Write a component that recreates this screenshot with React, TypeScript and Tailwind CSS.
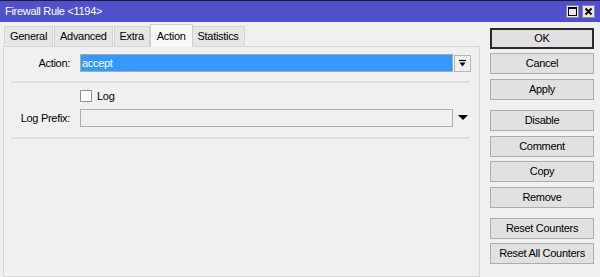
const tabs = ["General", "Advanced", "Extra", "Action", "Statistics"];

type Btn = { label: string; mt: string; primary?: boolean };

const buttons: Btn[] = [
  { label: "OK", mt: "mt-0", primary: true },
  { label: "Cancel", mt: "mt-[4px]" },
  { label: "Apply", mt: "mt-[5px]" },
  { label: "Disable", mt: "mt-[10px]" },
  { label: "Comment", mt: "mt-[5px]" },
  { label: "Copy", mt: "mt-[4px]" },
  { label: "Remove", mt: "mt-[5px]" },
  { label: "Reset Counters", mt: "mt-[10px]" },
  { label: "Reset All Counters", mt: "mt-[4px]" },
];

function TitleButtons() {
  return (
    <div className="ml-auto flex gap-[3px]">
      <div className="w-[13px] h-[13px] bg-[#e8e8e8] border border-[#8a8a8a] flex items-center justify-center">
        <div className="w-[9px] h-[9px] border border-black border-t-2" />
      </div>
      <div className="w-[13px] h-[13px] bg-[#e8e8e8] border border-[#8a8a8a] flex items-center justify-center">
        <svg width="9" height="9" viewBox="0 0 9 9">
          <path d="M1.5 1.5 L7.5 7.5 M7.5 1.5 L1.5 7.5" stroke="#000" strokeWidth="1.8" />
        </svg>
      </div>
    </div>
  );
}

export default function App() {
  return (
    <div className="w-[600px] h-[277px] overflow-hidden bg-[#f0f0f0] font-['Liberation_Sans',Arial,sans-serif] text-[11px] tracking-[-0.3px] text-black">
      <div className="h-[22px] border-t border-[#1e1e2e] bg-[#5050cc] flex items-center pl-[5px] pr-[5px]">
        <span className="text-white text-[11px] leading-none">Firewall Rule &lt;1194&gt;</span>
        <TitleButtons />
      </div>

      <div className="flex">
        <div className="pl-[3px] w-[480px] flex flex-col">
          <div className="h-[24px] flex items-end pl-[1px]">
            {tabs.map((t) => {
              const active = t === "Action";
              return (
                <div
                  key={t}
                  className={`flex items-center px-[5px] border border-b-0 ${
                    active
                      ? "h-[23px] bg-[#f7f7f7] border-[#d0d0d0] -mb-px relative z-10 mx-[-1px] px-[6px]"
                      : "h-[20px] bg-[#e6e6e6] border-[#d4d4d4] mr-[1px]"
                  }`}
                >
                  {t}
                </div>
              );
            })}
          </div>

          <div className="w-[477px] h-[231px] border border-[#d6d6d6] bg-[#f0f0f0] pt-[7px]">
            <div className="flex items-center h-[18px]">
              <div className="w-[66px] text-right">Action:</div>
              <div className="ml-[10px] w-[373px] h-[18px] border border-[#a9a9a9] bg-[#3399ff] text-white flex items-center pl-[1px]">
                accept
              </div>
              <div className="ml-[1px] w-[17px] h-[17px] border border-[#b4b4b4] bg-[#f0f0f0] flex items-center justify-center">
                <svg width="9" height="9" viewBox="0 0 9 9">
                  <path d="M1 1.5 H8" stroke="#000" strokeWidth="1.2" />
                  <path d="M1.5 3.5 H7.5 L4.5 7.5 Z" fill="#000" />
                </svg>
              </div>
            </div>

            <div className="ml-[7px] mt-[9px] w-[459px] h-[2px] bg-[#dfdfdf]" />

            <div className="flex items-center mt-[7px] h-[12px]">
              <div className="ml-[76px] w-[12px] h-[12px] border border-[#8f8f8f] bg-white" />
              <span className="ml-[5px]">Log</span>
            </div>

            <div className="flex items-center mt-[7px] h-[18px]">
              <div className="w-[66px] text-right">Log Prefix:</div>
              <div className="ml-[10px] w-[373px] h-[18px] border border-[#acacac] bg-[#f0f0f0]" />
              <svg className="ml-[5px]" width="10" height="6" viewBox="0 0 10 6">
                <path d="M0 0 H10 L5 5 Z" fill="#000" />
              </svg>
            </div>

            <div className="ml-[7px] mt-[10px] w-[459px] h-[2px] bg-[#dfdfdf]" />
          </div>
        </div>

        <div className="ml-[10px] pt-[6px] flex flex-col w-[104px]">
          {buttons.map((b) => (
            <div
              key={b.label}
              className={`${b.mt} h-[21px] flex items-center justify-center bg-[#e1e1e1] ${
                b.primary ? "border-2 border-[#2a2a2a]" : "border border-[#adadad]"
              }`}
            >
              {b.label}
            </div>
          ))}
        </div>
      </div>
    </div>
  );
}
